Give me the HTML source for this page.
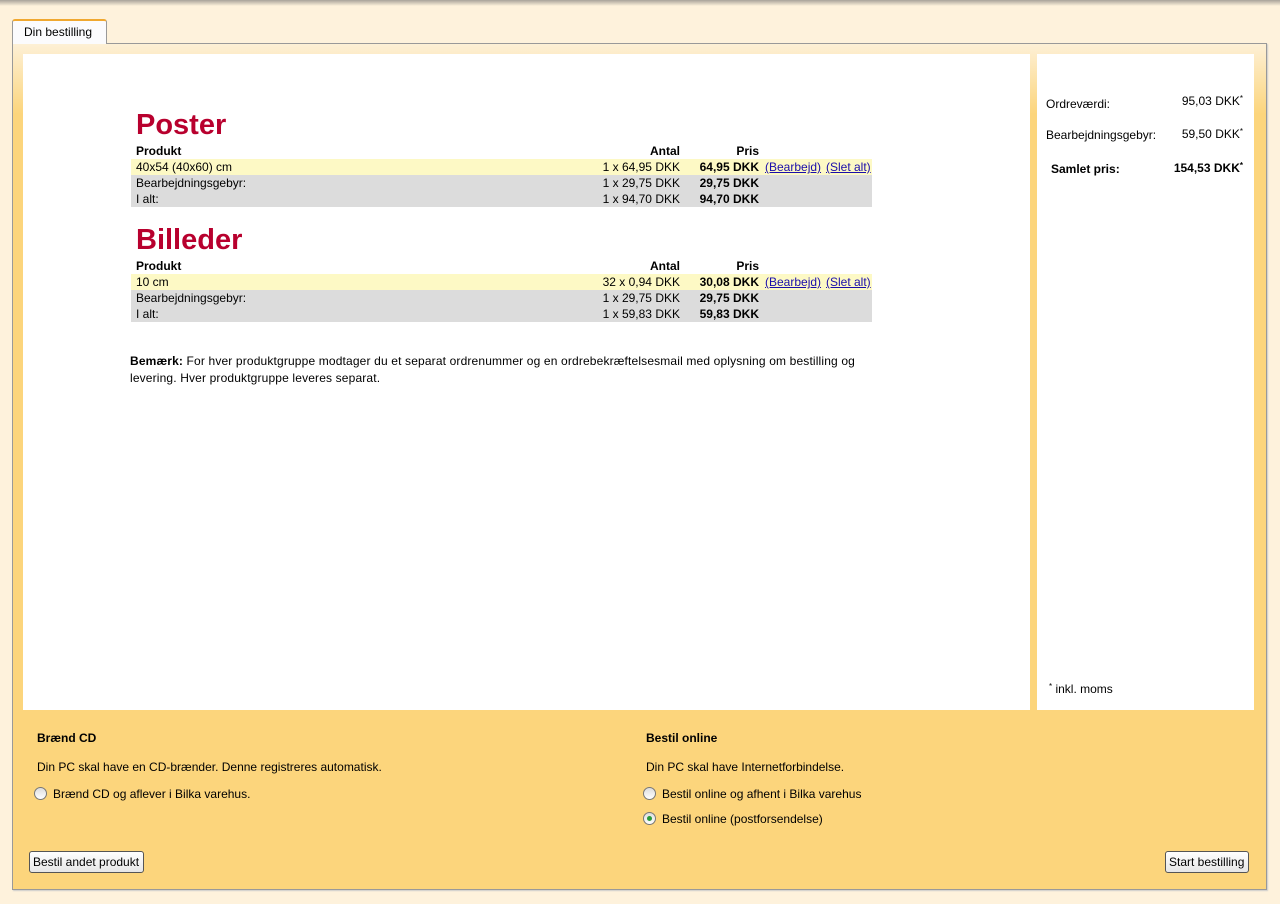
<!DOCTYPE html>
<html><head><meta charset="utf-8"><style>
*{margin:0;padding:0;box-sizing:border-box}
body{width:1280px;height:904px;background:#fef2dc;font-family:"Liberation Sans",Arial,sans-serif;font-size:12px;color:#000;position:relative;overflow:hidden}
.topbar{position:absolute;left:0;top:0;width:1280px;height:6px;background:linear-gradient(#a8a29a,#fef2dc)}
.tab{position:absolute;left:12px;top:19px;width:95px;height:25px;background:#fbfbfd;border:1px solid #999;border-top:2px solid #f0a830;border-bottom:none;border-radius:3px 3px 0 0;font-size:12px;padding:4px 0 0 11px;z-index:2}
.panel{position:absolute;left:12px;top:43px;width:1255px;height:847px;border:1px solid #999;background:linear-gradient(#fdf0d6 0px,#fcd57c 70px,#fcd57c);box-shadow:1px 1px 1px #ccc}
.white{position:absolute;background:#fff}
.a{position:absolute;white-space:nowrap}
h1{position:absolute;font-size:29px;color:#b8002e;font-weight:bold;left:136px}
.row{position:absolute;left:131px;width:741px;height:16px}
.y{background:#fdf9c5}.g{background:#dcdcdc}
.c{position:absolute;top:1px;white-space:nowrap}
.p{left:5px}.n{right:192px;text-align:right}.pr{right:113px;text-align:right;font-weight:bold}
.l{left:634px;color:#1a0dab;text-decoration:underline}
.radio{position:absolute;width:13px;height:13px;border:1px solid #777;border-radius:50%;background:linear-gradient(#ddd,#fff)}
.btn{position:absolute;height:22px;border:1px solid #555;border-radius:3px;background:linear-gradient(#fff,#e6e6e6);font-size:12px;padding:3px 3px 0 3px;white-space:nowrap}
sup{font-size:8px;vertical-align:4px}
</style></head><body>
<div class="topbar"></div>
<div class="tab">Din bestilling</div>
<div class="panel"></div>
<div class="white" style="left:23px;top:54px;width:1007px;height:656px"></div>
<div class="white" style="left:1037px;top:54px;width:217px;height:656px"></div>

<h1 style="top:109px">Poster</h1>
<div class="row" style="top:143px"><span class="c p" style="font-weight:bold">Produkt</span><span class="c n" style="font-weight:bold">Antal</span><span class="c pr">Pris</span></div>
<div class="row y" style="top:159px"><span class="c p">40x54 (40x60) cm</span><span class="c n">1 x 64,95 DKK</span><span class="c pr">64,95 DKK</span><span class="c l">(Bearbejd)</span><span class="c l" style="left:695px">(Slet alt)</span></div>
<div class="row g" style="top:175px"><span class="c p">Bearbejdningsgebyr:</span><span class="c n">1 x 29,75 DKK</span><span class="c pr">29,75 DKK</span></div>
<div class="row g" style="top:191px"><span class="c p">I alt:</span><span class="c n">1 x 94,70 DKK</span><span class="c pr">94,70 DKK</span></div>

<h1 style="top:224px">Billeder</h1>
<div class="row" style="top:258px"><span class="c p" style="font-weight:bold">Produkt</span><span class="c n" style="font-weight:bold">Antal</span><span class="c pr">Pris</span></div>
<div class="row y" style="top:274px"><span class="c p">10 cm</span><span class="c n">32 x 0,94 DKK</span><span class="c pr">30,08 DKK</span><span class="c l">(Bearbejd)</span><span class="c l" style="left:695px">(Slet alt)</span></div>
<div class="row g" style="top:290px"><span class="c p">Bearbejdningsgebyr:</span><span class="c n">1 x 29,75 DKK</span><span class="c pr">29,75 DKK</span></div>
<div class="row g" style="top:306px"><span class="c p">I alt:</span><span class="c n">1 x 59,83 DKK</span><span class="c pr">59,83 DKK</span></div>

<div class="a" style="left:130px;top:353px;line-height:17px;white-space:normal;width:740px;letter-spacing:0.15px"><b>Bemærk:</b> For hver produktgruppe modtager du et separat ordrenummer og en ordrebekræftelsesmail med oplysning om bestilling og levering. Hver produktgruppe leveres separat.</div>

<div class="a" style="left:1046px;top:97px">Ordreværdi:</div>
<div class="a" style="right:37px;top:94px">95,03 DKK<sup>*</sup></div>
<div class="a" style="left:1046px;top:128px">Bearbejdningsgebyr:</div>
<div class="a" style="right:37px;top:127px">59,50 DKK<sup>*</sup></div>
<div class="a" style="left:1051px;top:162px;font-weight:bold">Samlet pris:</div>
<div class="a" style="right:37px;top:161px;font-weight:bold">154,53 DKK<sup>*</sup></div>
<div class="a" style="left:1049px;top:682px"><sup>*</sup> inkl. moms</div>

<div class="a" style="left:37px;top:731px;font-weight:bold">Brænd CD</div>
<div class="a" style="left:37px;top:760px">Din PC skal have en CD-brænder. Denne registreres automatisk.</div>
<div class="radio" style="left:34px;top:787px"></div>
<div class="a" style="left:53px;top:787px">Brænd CD og aflever i Bilka varehus.</div>

<div class="a" style="left:646px;top:731px;font-weight:bold">Bestil online</div>
<div class="a" style="left:646px;top:760px">Din PC skal have Internetforbindelse.</div>
<div class="radio" style="left:643px;top:787px"></div>
<div class="a" style="left:662px;top:787px">Bestil online og afhent i Bilka varehus</div>
<div class="radio" style="left:643px;top:812px"><div style="position:absolute;left:3px;top:3px;width:5px;height:5px;border-radius:50%;background:#2a9a3a"></div></div>
<div class="a" style="left:662px;top:812px">Bestil online (postforsendelse)</div>

<div class="btn" style="left:29px;top:851px;width:115px">Bestil andet produkt</div>
<div class="btn" style="left:1165px;top:851px;width:84px">Start bestilling</div>
</body></html>
